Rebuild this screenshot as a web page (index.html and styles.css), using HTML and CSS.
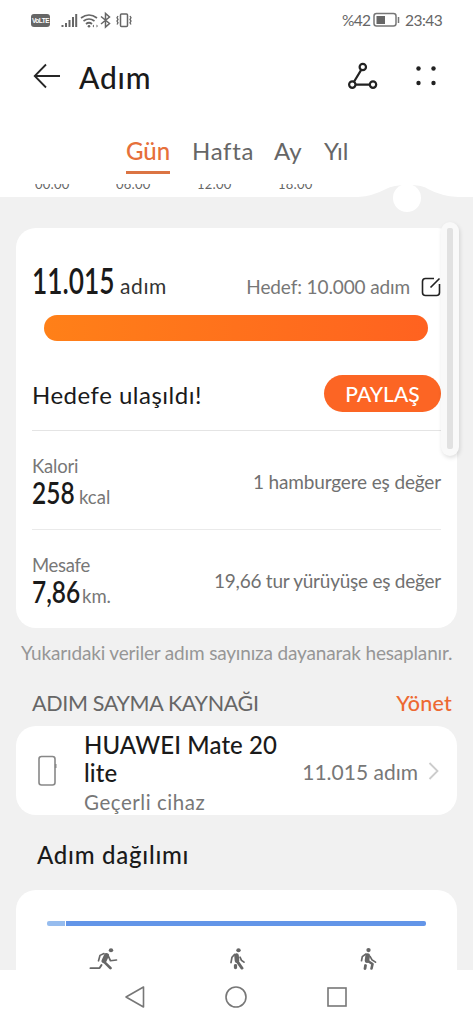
FILE: index.html
```html
<!DOCTYPE html>
<html lang="tr">
<head>
<meta charset="utf-8">
<meta name="viewport" content="width=device-width, initial-scale=1">
<title>Adım</title>
<link rel="stylesheet" href="styles.css">
</head>
<body>
<header class="top">
  <div class="status">
    <span class="volte">VoLTE</span>
    <svg class="signals" width="74" height="18" viewBox="0 0 74 18" fill="none" stroke="#666" stroke-width="1.5">
      <path d="M1.500 14v2M5 12v4M8.500 9v7M12 6v10M15.200 3v13" stroke-width="2"/>
      <path d="M20 7q8-6 16 0M22.500 10q5.500-4 11 0M25 13q3-2.500 6 0" stroke-width="1.700"/>
      <circle cx="28" cy="15.300" r="1.300" fill="#666" stroke="none"/>
      <path d="M31.500 15l1.500-1.500v3zM37 15l-1.500-1.500v3z" fill="#666" stroke="none"/>
      <path d="M40 5.500l8.500 7-4 3.500V2.500l4 3.500-8.500 7"/>
      <rect x="59.500" y="3" width="7" height="12.500" rx="1"/>
      <path d="M57 5l-1 1.700 1 1.700-1 1.700 1 1.700-1 1.700M69 5l1 1.700-1 1.700 1 1.700-1 1.700 1 1.700" stroke-width="1.300"/>
    </svg>
    <span class="pct">%42</span>
    <svg class="battery" width="28" height="16" viewBox="0 0 28 16"><rect x="1" y="1.500" width="22" height="12.500" rx="2.500" fill="none" stroke="#777" stroke-width="1.500"/><rect x="3.500" y="4" width="8.500" height="8" fill="#666"/><path d="M25.500 5v6" stroke="#777" stroke-width="1.500"/></svg>
    <span class="clock">23:43</span>
  </div>
  <div class="appbar">
    <svg class="back" width="28" height="28" viewBox="0 0 28 28" fill="none" stroke="#262626" stroke-width="1.800"><path d="M27 14H2M13 2.500L1.700 14 13 25.500"/></svg>
    <h1 class="title">Adım</h1>
    <svg class="route" width="30" height="28" viewBox="0 0 30 28" fill="none" stroke="#222" stroke-width="2.200"><circle cx="14.800" cy="5" r="3.200"/><circle cx="4.300" cy="22.600" r="3.200"/><circle cx="25" cy="22.600" r="3.200"/><path d="M13.200 7.900L6 19.700M7.600 22.600h14"/></svg>
    <svg class="more" width="24" height="24" viewBox="0 0 24 24" fill="#222"><circle cx="4.500" cy="4.500" r="2.200"/><circle cx="19.500" cy="4.500" r="2.200"/><circle cx="4.500" cy="19" r="2.200"/><circle cx="19.500" cy="19" r="2.200"/></svg>
  </div>
  <nav class="tabs"><span class="tab on">Gün</span><span class="tab hafta">Hafta</span><span class="tab ay">Ay</span><span class="tab yil">Yıl</span></nav>
</header>
<div class="axis">
  <span>00:00</span><span>06:00</span><span>12:00</span><span>18:00</span>
  <svg class="notch" width="100" height="28" viewBox="0 0 100 28"><path d="M0 12Q15 11 28 4Q35 0 50 0T70 4Q83 11 100 12V28H0z" fill="#f1f1f1"/><circle cx="49" cy="13" r="14" fill="#fff"/></svg>
</div>
<main class="content">
  <section class="card summary">
    <div class="headline"><span class="big steps"><b>11.015</b></span><span class="unit">adım</span><span class="goal">Hedef: 10.000 adım</span>
      <svg class="edit" width="20" height="20" viewBox="0 0 20 20" fill="none" stroke="#222" stroke-width="1.600"><path d="M13 1.500H4.500Q1.500 1.500 1.500 4.500v11q0 3 3 3h11q3 0 3-3V7M9.500 10.500L18.500 1.500"/></svg>
    </div>
    <div class="bar"></div>
    <div class="reached"><span class="done">Hedefe ulaşıldı!</span><button class="share">PAYLAŞ</button></div>
    <div class="metric"><div><div class="label kalori">Kalori</div><div class="value"><span class="big kc"><b>258</b></span><span class="small">kcal</span></div></div><span class="equal burger">1 hamburgere eş değer</span></div>
    <div class="metric last"><div><div class="label mesafe">Mesafe</div><div class="value"><span class="big km"><b>7,86</b></span><span class="small">km.</span></div></div><span class="equal laps">19,66 tur yürüyüşe eş değer</span></div>
    <div class="thumb"><i></i></div>
  </section>
  <p class="note">Yukarıdaki veriler adım sayınıza dayanarak hesaplanır.</p>
  <div class="source-head"><span class="source-title">ADIM SAYMA KAYNAĞI</span><span class="manage">Yönet</span></div>
  <section class="card device">
    <svg width="19" height="32" viewBox="0 0 19 32" fill="none" stroke="#888" stroke-width="1.600"><rect x="1" y="1.500" width="16" height="28.500" rx="2.500"/><path d="M17.700 9v4"/></svg>
    <div class="names"><div class="model">HUAWEI Mate 20<br>lite</div><div class="current">Geçerli cihaz</div></div>
    <span class="count">11.015 adım</span>
    <svg class="chev" width="12" height="20" viewBox="0 0 12 20" fill="none" stroke="#ccc" stroke-width="1.800"><path d="M1.500 2l8 8-8 8"/></svg>
  </section>
  <h2 class="dist-title">Adım dağılımı</h2>
  <section class="card dist">
    <div class="split"><i class="light"></i><i class="dark"></i></div>
    <div class="kinds">
      <svg width="29" height="22" viewBox="0 0 29 24" preserveAspectRatio="none" fill="none" stroke="#666" stroke-linecap="round" stroke-linejoin="round"><circle cx="22" cy="2.500" r="2.200" fill="#666" stroke="none"/><path d="M17.500 8L15 14" stroke-width="5"/><path d="M15 6L11 8l-1.500 6M19 8l2.500 6 6-.8" stroke-width="1.700"/><path d="M15 15l6.500 7" stroke-width="2.800"/><path d="M12.500 18.500l-2 3.500H1.500" stroke-width="2"/></svg>
      <svg width="20" height="22" viewBox="0 0 20 24" preserveAspectRatio="none" fill="none" stroke="#666" stroke-linecap="round" stroke-linejoin="round"><circle cx="11.500" cy="2.500" r="2.200" fill="#666" stroke="none"/><path d="M9.500 8l.5 6" stroke-width="4.600"/><path d="M7.500 7L5 10 4 16M13 10l1.500 3.500 2.500 2" stroke-width="1.700"/><path d="M10.500 15l4.500 7" stroke-width="3"/><path d="M8.500 19v2.500" stroke-width="3.200"/></svg>
      <svg width="20" height="22" viewBox="0 0 20 24" preserveAspectRatio="none" fill="none" stroke="#666" stroke-linecap="round" stroke-linejoin="round"><circle cx="10.500" cy="2.300" r="2.200" fill="#666" stroke="none"/><path d="M9.700 8L9 14" stroke-width="4.600"/><path d="M8 6.500L4.300 9.500 3.500 14M12 9l2 4 3.500 2.500" stroke-width="1.700"/><path d="M9.500 14l5 3.500-1 5" stroke-width="2.600"/><path d="M7.500 19l-.5 3.500" stroke-width="2.800"/></svg>
    </div>
  </section>
</main>
<footer class="navbar">
  <svg width="22" height="24" viewBox="0 0 22 24" fill="none" stroke="#777" stroke-width="1.600" stroke-linejoin="round"><path d="M19.500 2v20L2 12z"/></svg>
  <svg width="24" height="24" viewBox="0 0 24 24" fill="none" stroke="#777" stroke-width="1.600"><circle cx="12" cy="12" r="10"/></svg>
  <svg width="22" height="22" viewBox="0 0 22 22" fill="none" stroke="#777" stroke-width="1.600"><rect x="2" y="2" width="18" height="18"/></svg>
</footer>
</body>
</html>
```
FILE: styles.css
```css
* { box-sizing: border-box; }
body { margin: 0; width: 473px; height: 1024px; overflow: hidden; display: flex; flex-direction: column; background: #f1f1f1; color: #1a1a1a; font-family: Lato, "Noto Sans", sans-serif; white-space: nowrap; }
h1, h2, p { margin: 0; }
svg { display: block; flex: none; }
.top { background: #fff; height: 184px; flex: none; }
.status { height: 40px; display: flex; align-items: center; padding: 0 31px; color: #666; font-size: 15.5px; }
.volte { width: 19px; height: 13px; margin-right: 11px; border-radius: 3px; background: #666; color: #fff; font: bold 6.5px/13px "Liberation Sans", sans-serif; letter-spacing: -.5px; text-align: center; }
.pct { margin-left: auto; width: 28px; letter-spacing: -.7px; }
.battery { margin: 0 4px 0 3px; }
.clock { width: 37px; letter-spacing: -.5px; }
.appbar { height: 74px; display: flex; align-items: center; padding: 0 35px 2px 33px; }
.title { margin-left: 18px; padding-top: 2px; font-size: 30px; font-weight: 500; letter-spacing: .8px; }
.route { margin-left: auto; }
.more { margin-left: 36px; }
.tabs { height: 70px; display: flex; padding: 19px 0 0 126px; color: #666; font-size: 24px; line-height: 36px; }
.tab { height: 41px; }
.on { width: 44px; color: #e6703a; font-weight: 500; border-bottom: 3px solid #db7443; }
.hafta { margin-left: 22px; width: 61px; letter-spacing: .7px; }
.ay { margin-left: 21px; width: 28px; }
.yil { margin-left: 22px; }
.axis { position: relative; height: 13px; flex: none; display: flex; padding-left: 35px; background: #fff; color: #666; font-size: 13px; }
.axis span { width: 81px; height: 8px; line-height: 16px; overflow: hidden; display: flex; align-items: flex-end; letter-spacing: .2px; }
.notch { position: absolute; left: 358px; top: 1px; }
.content { height: 773px; flex: none; overflow: hidden; padding: 31px 16px 0; }
.card { background: #fff; border-radius: 20px; }
.summary { position: relative; height: 400px; padding: 0 16px; }
.headline { height: 87px; display: flex; align-items: baseline; padding-top: 29px; }
.big b { display: inline-block; font-weight: 600; transform-origin: left bottom; }
.steps { width: 88px; }
.steps b { font-size: 37px; transform: scaleX(.71); }
.unit { font-size: 21px; color: #333; letter-spacing: .6px; }
.goal { margin-left: auto; color: #777; font-size: 19px; letter-spacing: -.12px; }
.edit { margin-left: 11px; align-self: flex-start; margin-top: 20px; }
.bar { height: 26px; margin: 0 13px 0 12px; border-radius: 13px; background: linear-gradient(90deg, #ff8018, #ff6220); }
.reached { height: 90px; display: flex; align-items: center; justify-content: space-between; padding-top: 16px; border-bottom: 1px solid #e4e4e4; }
.done { font-size: 24px; padding-top: 2px; letter-spacing: .5px; }
.share { width: 117px; height: 37px; padding: 0; border: 0; border-radius: 19px; background: #fc6524; color: #fff; font: 500 21px Lato, sans-serif; }
.metric { height: 99px; display: flex; justify-content: space-between; padding-top: 24px; border-bottom: 1px solid #eaeaea; }
.last { border: 0; }
.label { height: 22px; line-height: 22px; color: #777; font-size: 18.5px; }
.mesafe { letter-spacing: -.3px; }
.kalori { letter-spacing: -.2px; }
.value { height: 30px; line-height: 30px; display: flex; align-items: baseline; }
.value b { font-size: 31px; transform: scaleX(.79); }
.kc { width: 47px; }
.km { width: 50px; }
.small { color: #777; font-size: 18.5px; }
.equal { color: #707070; font-size: 19px; line-height: 24px; padding-top: 15px; letter-spacing: -.15px; }
.laps { letter-spacing: -.24px; }
.thumb { position: absolute; left: 425px; top: -6px; width: 18px; height: 234px; padding: 6px; border-radius: 9px; background: #f9f9f9; box-shadow: 1px 2px 4px rgba(0,0,0,.13); }
.thumb i { display: block; height: 221px; background: #e1e1e1; border-radius: 2px; }
.note { height: 49px; line-height: 49px; margin: 0 0 0 5px; color: #969696; font-size: 19px; letter-spacing: -.17px; }
.source-head { height: 49px; display: flex; justify-content: space-between; padding: 11px 5px 0 16px; color: #666; font-size: 21.5px; line-height: 30px; }
.source-title { letter-spacing: -.33px; }
.manage { color: #ed6932; font-weight: 500; letter-spacing: .2px; }
.device { height: 89px; display: flex; align-items: center; padding: 0 17px 0 22px; }
.names { margin-left: 27px; padding-top: 6px; }
.model { font-size: 24px; line-height: 28px; font-weight: 500; letter-spacing: .1px; }
.current { color: #777; font-size: 20.5px; line-height: 30px; letter-spacing: .55px; }
.count { margin-left: auto; color: #777; font-size: 21px; padding-top: 2px; }
.chev { margin-left: 10px; }
.dist-title { height: 75px; line-height: 79px; padding-left: 21px; font-size: 24px; font-weight: 500; letter-spacing: .75px; }
.dist { height: 120px; padding: 31px 31px 0; }
.split { display: flex; gap: 1px; height: 5px; }
.light { width: 18px; border-radius: 2px 0 0 2px; background: #96bcee; }
.dark { flex: 1; border-radius: 0 2px 2px 0; background: #6395e8; }
.kinds { display: flex; padding: 22px 0 0 42px; }
.kinds svg:nth-child(2) { margin-left: 109px; }
.kinds svg:nth-child(3) { margin-left: 111px; }
.navbar { height: 54px; flex: none; display: flex; align-items: center; background: #fff; padding-left: 124px; }
.navbar svg:nth-child(2) { margin-left: 78px; }
.navbar svg:nth-child(3) { margin-left: 78px; }
```
